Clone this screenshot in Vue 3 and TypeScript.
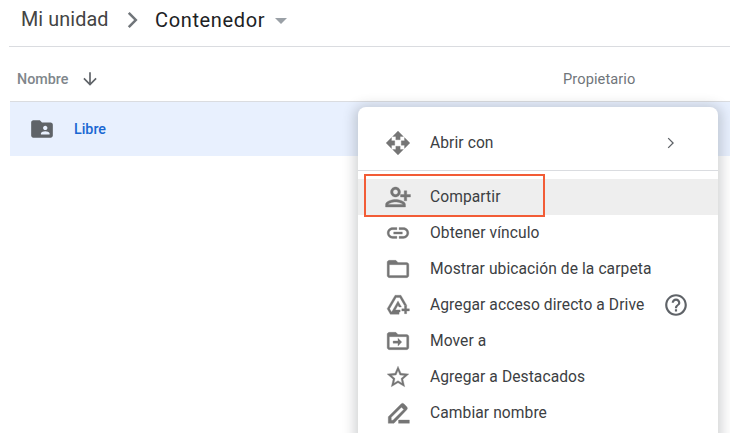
<script setup lang="ts">
interface MenuItem {
  label: string
  icon: string
  active?: boolean
  help?: boolean
}

const moveIcon = 'M10 9h4V6h3l-5-5-5 5h3v3zm-1 1H6V7l-5 5 5 5v-3h3v-4zm14 2l-5-5v3h-3v4h3v3l5-5zm-9 3h-4v3H7l5 5 5-5h-3v-3z'

const items: MenuItem[] = [
  {
    label: 'Compartir',
    active: true,
    icon: 'M10 12c2.21 0 4-1.79 4-4s-1.79-4-4-4-4 1.79-4 4 1.79 4 4 4zm0-6c1.1 0 2 .9 2 2s-.9 2-2 2-2-.9-2-2 .9-2 2-2zm9 4V7h-2v3h-3v2h3v3h2v-3h3v-2h-3zm-9 4c-2.67 0-8 1.34-8 4v2h16v-2c0-2.66-5.33-4-8-4zm-6 4c.22-.72 3.31-2 6-2 2.7 0 5.8 1.29 6 2H4z',
  },
  {
    label: 'Obtener vínculo',
    icon: 'M3.9 12c0-1.71 1.39-3.1 3.1-3.1h4V7H7c-2.76 0-5 2.24-5 5s2.24 5 5 5h4v-1.9H7c-1.71 0-3.1-1.39-3.1-3.1zM8 13h8v-2H8v2zm9-6h-4v1.9h4c1.71 0 3.1 1.39 3.1 3.1s-1.39 3.1-3.1 3.1h-4V17h4c2.76 0 5-2.24 5-5s-2.24-5-5-5z',
  },
  {
    label: 'Mostrar ubicación de la carpeta',
    icon: 'M20 6h-8l-2-2H4c-1.1 0-2 .9-2 2v12c0 1.1.9 2 2 2h16c1.1 0 2-.9 2-2V8c0-1.1-.9-2-2-2zm0 12H4V8h16v10z',
  },
  {
    label: 'Agregar acceso directo a Drive',
    help: true,
    icon: 'M9.3 3h5.4l5.600 9.600h-2.300L13.600 5h-3.200L4.300 15.400 6 18.500h7v2H4.900L2 15.400zM12 8.200l3.200 5.600h-2.300L12 12.200 9.600 16.500H14v2H6.200z M18 15.500v-2.500h2v2.500h2.500v2H20V20h-2v-2.500h-2.500v-2z',
  },
  {
    label: 'Mover a',
    icon: 'M20 6h-8l-2-2H4c-1.1 0-2 .9-2 2v12c0 1.1.9 2 2 2h16c1.1 0 2-.9 2-2V8c0-1.1-.9-2-2-2zm0 12H4V8h16v10zM12 9.500l3.500 3.500-3.500 3.500V14H7.500v-2H12z',
  },
  {
    label: 'Agregar a Destacados',
    icon: 'M22 9.24l-7.19-.62L12 2 9.19 8.63 2 9.24l5.46 4.73L5.82 21 12 17.27 18.18 21l-1.63-7.03L22 9.24zM12 15.4l-3.76 2.27 1-4.28-3.32-2.88 4.38-.38L12 6.100l1.710 4.040 4.380.38-3.320 2.880 1 4.280L12 15.400z',
  },
  {
    label: 'Cambiar nombre',
    icon: 'M3 21.500V15.500L14.800 3.700a2 2 0 0 1 2.800 0l2.500 2.500a2 2 0 0 1 0 2.800L8.300 21.500zM5.800 18.700h1.500L17.300 8.700 15.200 6.600 5.800 16zM12.500 18.500h10v3h-10z',
  },
]
</script>

<template>
  <div class="page">
    <header class="crumbs">
      <span class="crumb-root">Mi unidad</span>
      <svg class="crumb-sep" viewBox="0 0 24 24"><path d="M7 4.500 9.200 2.500 18.700 12l-9.500 9.500L7 19.500 14.500 12z" /></svg>
      <span class="crumb-current">Contenedor</span>
      <span class="crumb-caret"></span>
    </header>

    <div class="columns">
      <span class="col-name">Nombre</span>
      <svg class="sort" viewBox="0 0 24 24"><path d="M20 12l-1.410-1.410L13 16.170V4h-2v12.170l-5.580-5.590L4 12l8 8 8-8z" /></svg>
      <span class="col-owner">Propietario</span>
    </div>

    <div class="row">
      <svg class="row-icon" viewBox="0 0 24 24"><path d="M20 6h-8l-2-2H4c-1.100 0-2 .9-2 2v12c0 1.100.9 2 2 2h16c1.100 0 2-.9 2-2V8c0-1.100-.9-2-2-2zm-5 3c1.100 0 2 .9 2 2s-.9 2-2 2-2-.9-2-2 .9-2 2-2zm4 8h-8v-1c0-1.330 2.670-2 4-2s4 .670 4 2v1z" /></svg>
      <span class="row-name">Libre</span>
    </div>

    <div class="menu">
      <div class="item">
        <svg class="icon" viewBox="0 0 24 24"><path :d="moveIcon" /></svg>
        <span class="label">Abrir con</span>
        <svg class="chevron" viewBox="0 0 24 24"><path d="M8.600 5.400 10 4l8 8-8 8-1.400-1.400L15.200 12z" /></svg>
      </div>
      <div class="divider"></div>
      <div v-for="item in items" :key="item.label" class="item" :class="{ active: item.active }">
        <svg class="icon" viewBox="0 0 24 24"><path :d="item.icon" /></svg>
        <span class="label">{{ item.label }}</span>
        <svg v-if="item.help" class="help" viewBox="0 0 24 24"><path d="M11 18h2v-2h-2v2zm1-16C6.480 2 2 6.480 2 12s4.480 10 10 10 10-4.480 10-10S17.520 2 12 2zm0 18c-4.410 0-8-3.590-8-8s3.590-8 8-8 8 3.590 8 8-3.590 8-8 8zm0-14c-2.210 0-4 1.790-4 4h2c0-1.100.9-2 2-2s2 .9 2 2c0 2-3 1.750-3 5h2c0-2.250 3-2.500 3-5 0-2.210-1.790-4-4-4z" /></svg>
      </div>
      <div class="callout"></div>
    </div>
  </div>
</template>

<style scoped>
.page {
  position: relative;
  width: 730px;
  height: 433px;
  overflow: hidden;
  background: #fff;
  font-family: Roboto, "Liberation Sans", sans-serif;
}
.crumbs {
  display: flex;
  align-items: center;
  height: 47px;
  margin-left: 9px;
  padding: 0 0 7px 12px;
  box-sizing: border-box;
  border-bottom: 1px solid #dadce0;
}
.crumb-root { width: 88px; font-size: 19.800px; letter-spacing: 0.1px; color: #444; white-space: nowrap; }
.crumb-sep { width: 20px; height: 20px; margin: 0 13px 0 13px; fill: #70757a; }
.crumb-current { font-size: 20px; letter-spacing: 0.65px; color: #202124; }
.crumb-caret {
  width: 0;
  height: 0;
  margin: 2px 0 0 10px;
  border-left: 6px solid transparent;
  border-right: 6px solid transparent;
  border-top: 6px solid #9aa0a6;
}
.columns {
  display: flex;
  align-items: center;
  height: 55px;
  margin-left: 10px;
  padding: 10px 0 0 7px;
  box-sizing: border-box;
  border-bottom: 1px solid #dadce0;
  color: #80868b;
}
.col-name { width: 52px; font-size: 14.300px; font-weight: 500; }
.sort { width: 20px; height: 20px; margin-left: 11px; fill: #5f6368; }
.col-owner { margin-left: 463px; font-size: 14.600px; letter-spacing: 0.1px; color: #70757a; }
.row {
  display: flex;
  align-items: center;
  height: 54px;
  margin-left: 10px;
  background: #e8f0fe;
}
.row-icon { width: 26px; height: 26px; margin-left: 19px; fill: #5f6368; }
.row-name { margin-left: 19px; font-size: 14.300px; font-weight: 500; color: #1967d2; }
.menu {
  position: absolute;
  left: 358px;
  top: 107px;
  width: 360px;
  height: 340px;
  padding-top: 18px;
  box-sizing: border-box;
  background: #fff;
  border-radius: 8px;
  box-shadow: 0 2px 12px 4px rgba(60, 64, 67, 0.22);
}
.item {
  display: flex;
  align-items: center;
  height: 36px;
  padding-left: 27px;
  color: #3c4043;
}
.item.active { background: #eeeeee; }
.item.active .icon { transform: scale(1.15); }
.icon { flex: none; width: 26px; height: 26px; fill: #757575; fill-rule: evenodd; stroke: #757575; stroke-width: 0.3px; }
.label { margin-left: 19px; font-size: 15.600px; letter-spacing: 0.08px; }
.chevron { width: 16px; height: 16px; margin-left: auto; margin-right: 40px; fill: #5f6368; }
.help { width: 26px; height: 26px; margin-left: 19px; fill: #5f6368; }
.divider { height: 1px; margin: 9px 0 8px; background: #dadce0; }
.callout {
  position: absolute;
  left: 6px;
  top: 67px;
  width: 177px;
  height: 39px;
  border: 2px solid #f25c36;
}
</style>
